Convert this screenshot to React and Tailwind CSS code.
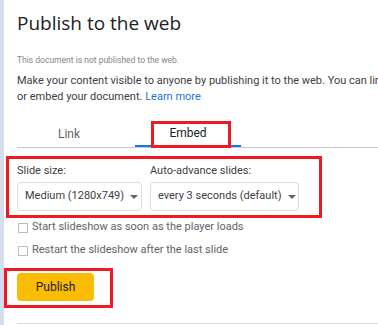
import React from 'react';

function Select({ value, width }) {
  return (
    <div className={`flex items-center justify-between h-[29px] border border-[#dadce0] rounded-[4px] bg-white pl-[7px] pr-[8px] ${width}`}>
      <span className="text-[11px] text-[#3c4043] whitespace-nowrap">{value}</span>
      <span className="w-0 h-0 border-l-[4px] border-r-[4px] border-t-[4px] border-l-transparent border-r-transparent border-t-[#5f6368] ml-[6px]" />
    </div>
  );
}

function Check({ label }) {
  return (
    <label className="flex items-center gap-[4px] h-[23px]">
      <span className="w-[10px] h-[10px] border border-[#bdbdbd] bg-white" />
      <span className="text-[11px] text-[#5f6368] whitespace-nowrap">{label}</span>
    </label>
  );
}

export default function App() {
  return (
    <div className="relative w-[378px] h-[325px] overflow-hidden bg-white flex" style={{ fontFamily: 'Roboto, "Liberation Sans", sans-serif' }}>
      <div className="w-[4px] bg-[#d5dceb] flex-shrink-0" />
      <div className="flex-1 pl-[13px] pt-[11px] flex flex-col [&>*]:flex-shrink-0">
        <h1 className="text-[19px] text-[#202124] leading-[24px]" style={{ fontFamily: '"Open Sans", Roboto, sans-serif' }}>Publish to the web</h1>

        <p className="mt-[19px] text-[8.5px] text-[#80868b] leading-[12px] whitespace-nowrap">This document is not published to the web.</p>

        <div className="mt-[7px] text-[11px] text-[#3c4043] leading-[16px] whitespace-nowrap">
          <div>Make your content visible to anyone by publishing it to the web. You can link to</div>
          <div>or embed your document. <span className="text-[#1a73e8]">Learn more</span></div>
        </div>

        {/* Tabs */}
        <div className="mt-[16px] flex border-b border-[#c4c7c5] w-[400px]">
          <div className="w-[104px] h-[26px] flex items-center justify-center text-[12px] text-[#5f6368]">Link</div>
          <div className="w-[14px]" />
          <div className="w-[106px] h-[26px] flex items-center justify-center text-[12px] text-[#202124] border-b-2 border-[#1a73e8] -mb-px">Embed</div>
        </div>

        {/* Embed options */}
        <div className="mt-[16px] flex gap-[8px]">
          <div className="flex flex-col">
            <span className="text-[11px] text-[#3c4043] leading-[14px]">Slide size:</span>
            <div className="mt-[4px]"><Select value="Medium (1280x749)" width="w-[125px]" /></div>
          </div>
          <div className="flex flex-col">
            <span className="text-[11px] text-[#3c4043] leading-[14px]">Auto-advance slides:</span>
            <div className="mt-[4px]"><Select value="every 3 seconds (default)" width="w-[149px]" /></div>
          </div>
        </div>

        <div className="mt-[5px] flex flex-col pl-[1px]">
          <Check label="Start slideshow as soon as the player loads" />
          <Check label="Restart the slideshow after the last slide" />
        </div>

        <button className="mt-[11px] w-[77px] h-[28px] rounded-[4px] bg-[#fbbc04] text-[12px] font-normal text-[#202124]">Publish</button>

        <div className="mt-[22px] border-t border-[#dadce0] w-[400px]" />
      </div>

      {/* red annotation boxes */}
      <div className="absolute left-[151px] top-[121px] w-[80px] h-[27px] border-[3px] border-[#ed1c24]" />
      <div className="absolute left-[6px] top-[156px] w-[316px] h-[62px] border-[3px] border-[#ed1c24]" />
      <div className="absolute left-[4px] top-[268px] w-[109px] h-[40px] border-[3px] border-[#ed1c24]" />
    </div>
  );
}
